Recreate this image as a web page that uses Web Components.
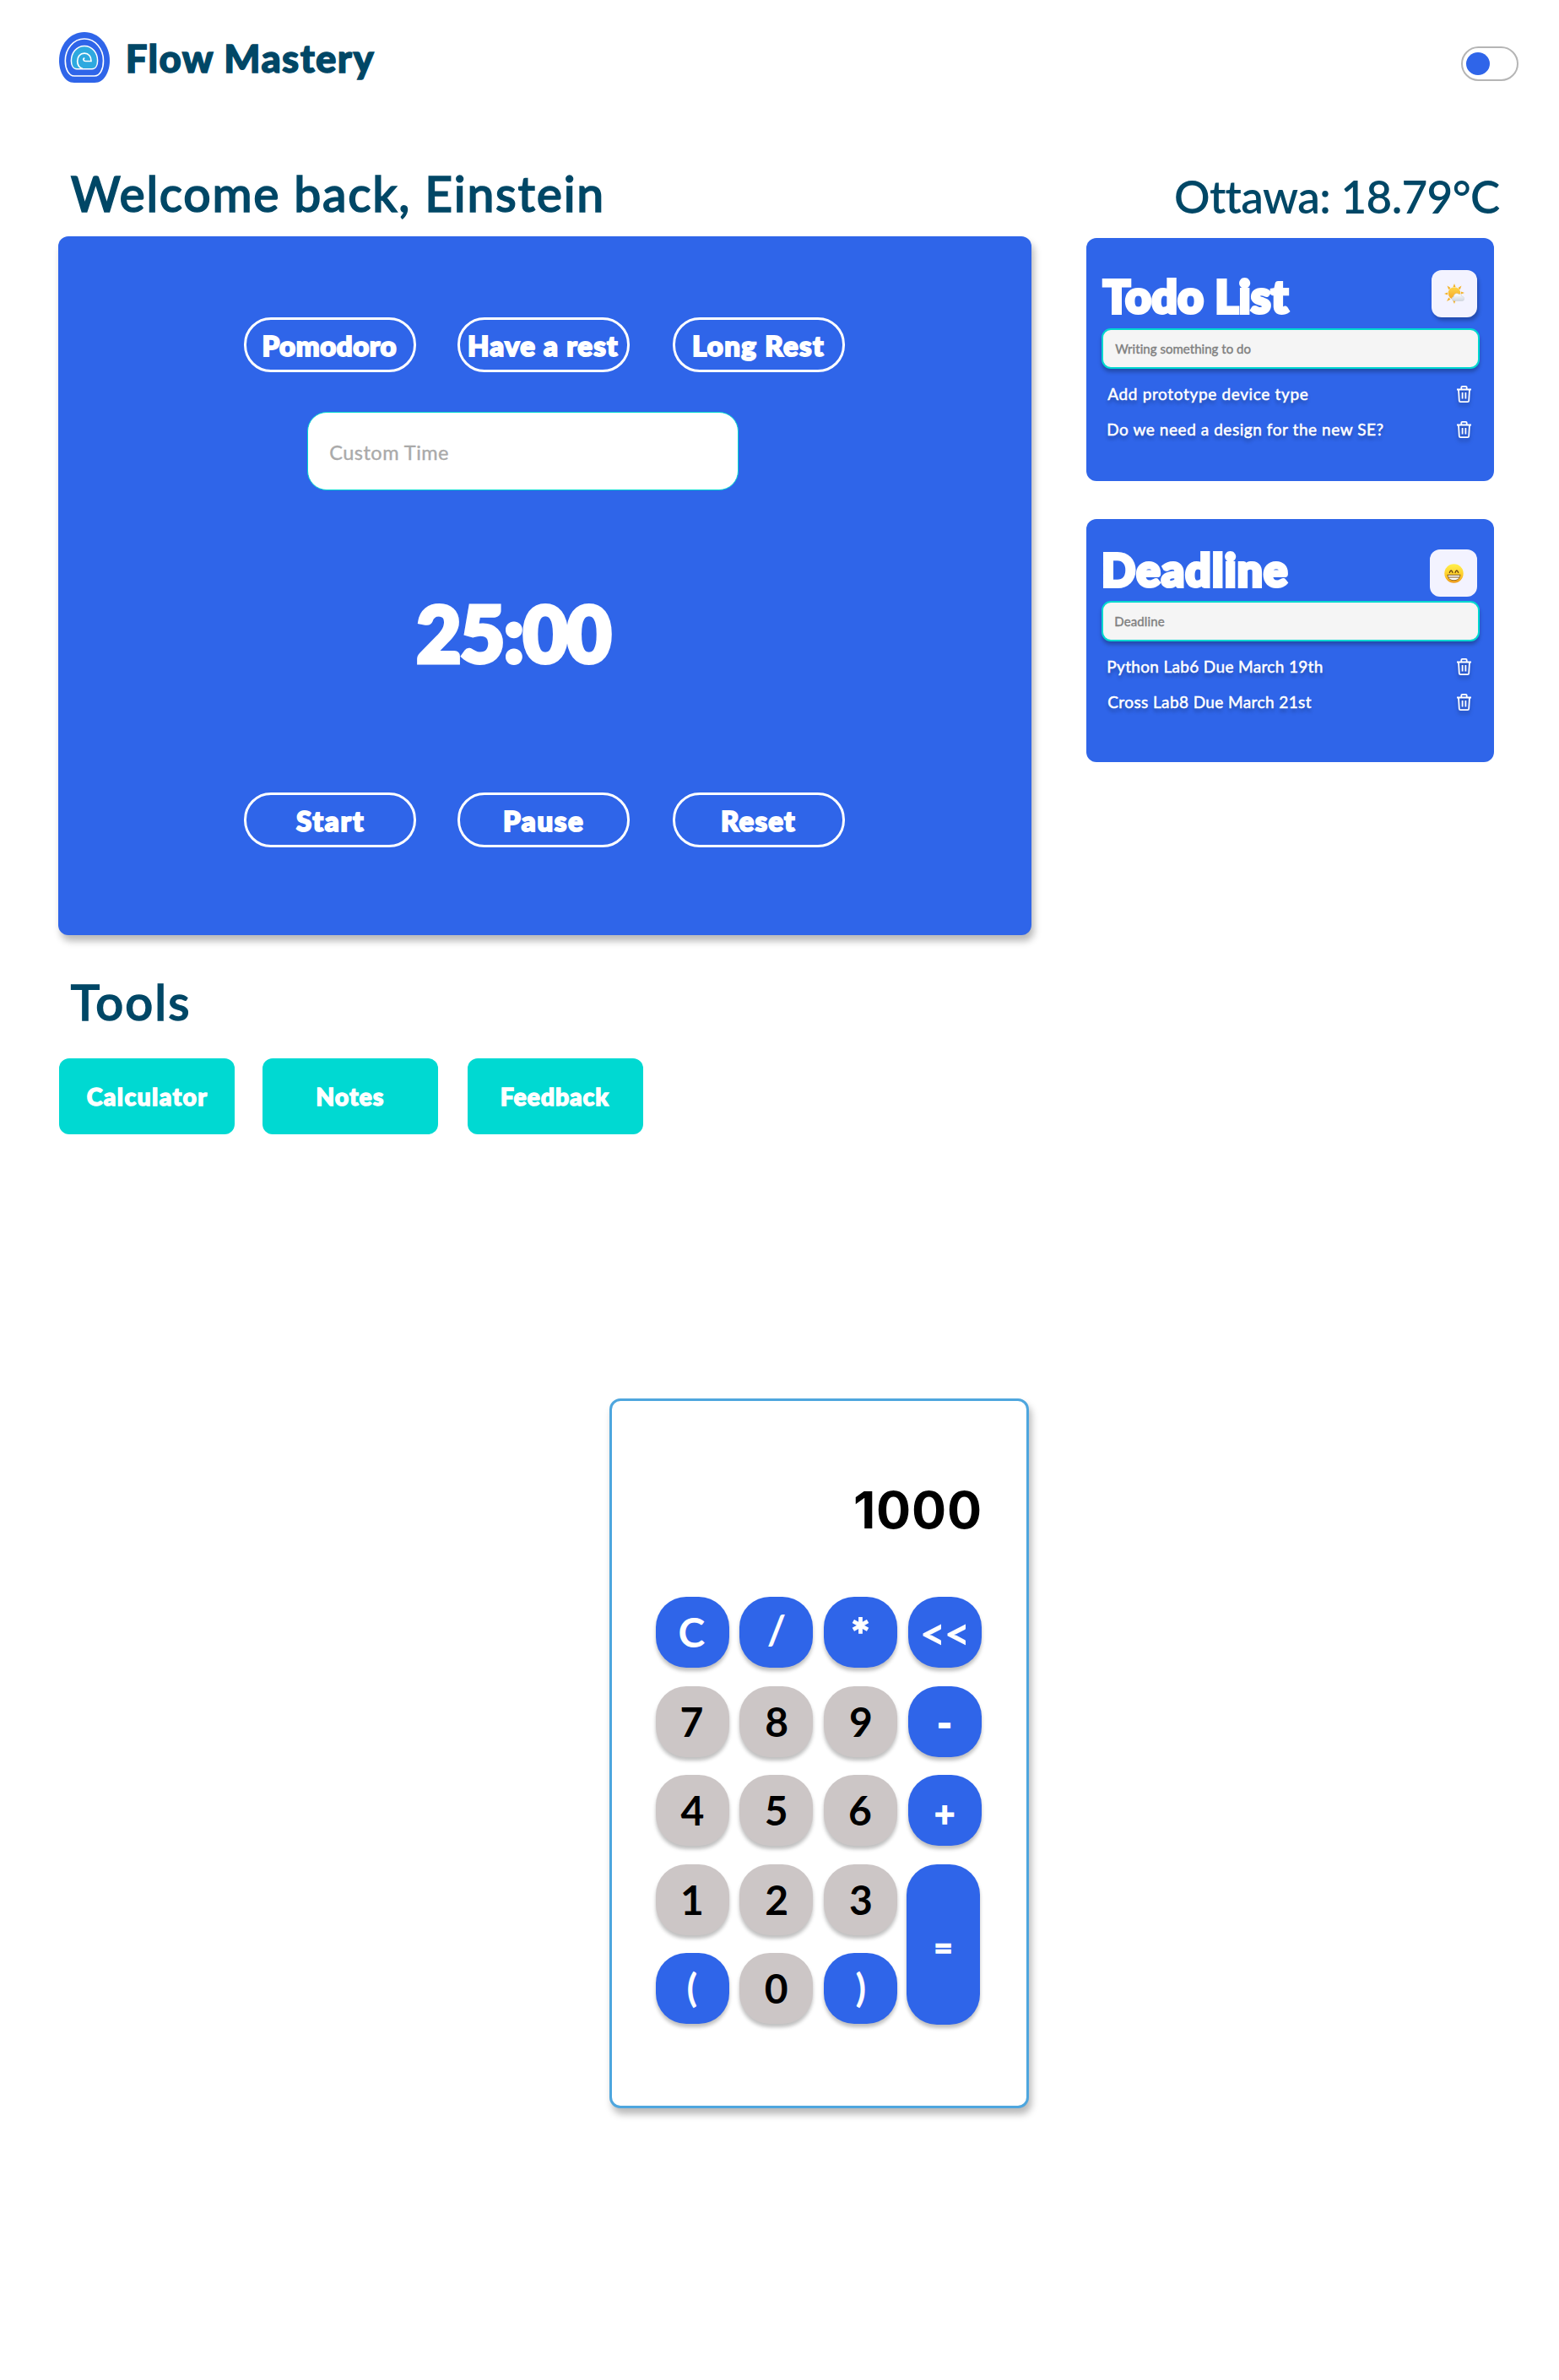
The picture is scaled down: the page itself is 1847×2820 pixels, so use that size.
<!DOCTYPE html>
<html lang="en">
<head>
<meta charset="utf-8">
<title>Flow Mastery</title>
<style>
  body { margin: 0; background: #fff; font-family: Lato, "Open Sans", sans-serif; }
</style>
</head>
<body>
<flow-app></flow-app>
<script>
const pen = document.createElement('canvas').getContext('2d');

/* One line of text whose ink spans exactly `w` pixels; `bold` thickens the strokes by that many pixels. */
class FitText extends HTMLElement {
  connectedCallback() {
    if (this.shadowRoot) return;
    const root = this.attachShadow({ mode: 'open' });
    const size = +this.getAttribute('size');
    const weight = this.getAttribute('weight') || '400';
    const family = this.getAttribute('family') || 'Lato';
    const bold = +this.getAttribute('bold') || 0;
    const text = this.textContent;
    pen.font = `${weight} ${size}px ${family}`;
    const m = pen.measureText(text);
    const ink = m.actualBoundingBoxLeft + m.actualBoundingBoxRight + bold;
    const w = +this.getAttribute('w') || ink;
    const gap = text.length > 1 ? (w - ink) / (text.length - 1) : 0;
    root.innerHTML = `<style>
      :host { display: block; flex: none; width: ${w}px; height: ${size}px; line-height: ${size}px;
        font-family: ${family}, sans-serif; font-size: ${size}px; font-weight: ${weight}; white-space: nowrap; }
      span { display: inline-block; margin-left: ${m.actualBoundingBoxLeft + bold / 2}px; letter-spacing: ${gap}px;
        ${bold ? `-webkit-text-stroke: ${bold}px currentColor;` : ''} }
    </style><span><slot></slot></span>`;
  }
}

class FlowLogo extends HTMLElement {
  constructor() {
    super();
    this.attachShadow({ mode: 'open' }).innerHTML = `<style>:host{display:block;width:60px;height:60px}svg{display:block}</style>
    <svg width="60" height="60" viewBox="0 0 60 60" fill="none">
      <path d="M30 0C47 0 60 15 60 34C60 46 54 60 42 60H18C6 60 0 46 0 34C0 15 13 0 30 0Z" fill="#2f65e9"/>
      <path d="M30 8C43 8 52.5 20 52.5 34C52.5 43 49 52 42 52H18C11 52 7.3 43 7.3 34C7.3 20 17 8 30 8Z" stroke="#fff" stroke-width="1.6"/>
      <path d="M30 16.4C39.5 16.4 45.6 25 45.6 34C45.6 39 43.5 43.7 39 43.7H21C16.500 43.7 14.400 39 14.400 34C14.400 25 20.500 16.400 30 16.400Z" fill="#2ea9df" stroke="#fff" stroke-width="1.500"/>
      <path d="M28 43.500C24 42 21.700 38.500 21.700 34.500C21.700 29 25 25.200 30 25.200C35 25.200 38.200 29 38 34.500H31.500C28.500 34.500 28 31.500 30.300 30.800" stroke="#fff" stroke-width="1.700"/>
    </svg>`;
  }
}

class ThemeSwitch extends HTMLElement {
  constructor() {
    super();
    this.attachShadow({ mode: 'open' }).innerHTML = `<style>
      :host{display:flex;align-items:center;box-sizing:border-box;width:68px;height:41px;border:2px solid #b5b5b5;border-radius:21px;padding-left:4px}
      i{width:28px;height:27px;border-radius:50%;background:#2f65e9}
    </style><i></i>`;
  }
}

class PillButton extends HTMLElement {
  constructor() {
    super();
    this.attachShadow({ mode: 'open' }).innerHTML = `<style>
      :host{display:flex;justify-content:center;box-sizing:border-box;width:204px;height:65px;border:3px solid #fff;border-radius:32px;padding-top:13.500px;color:#fff}
    </style><slot></slot>`;
  }
}

class ToolButton extends HTMLElement {
  constructor() {
    super();
    this.attachShadow({ mode: 'open' }).innerHTML = `<style>
      :host{display:flex;justify-content:center;box-sizing:border-box;width:208px;height:90px;border-radius:12px;padding-top:31px;background:#00d9d2;color:#fff}
    </style><slot></slot>`;
  }
}

class TrashIcon extends HTMLElement {
  constructor() {
    super();
    this.attachShadow({ mode: 'open' }).innerHTML = `<style>:host{display:block;width:17px;height:20px;filter:drop-shadow(0 4px 2px rgba(0,0,0,.25))}svg{display:block}</style>
    <svg width="17" height="20" viewBox="0 0 17 20" fill="none" stroke="#fff" stroke-width="1.800">
      <path d="M0 4.500H17M5.300 4.500V2Q5.300 .9 6.500 .9H10.500Q11.700 .9 11.700 2V4.500M2 4.500L2.800 17.700Q2.900 19.100 4.300 19.100H12.700Q14.100 19.100 14.200 17.700L15 4.500M6.600 8V15.500M10.400 8V15.500"/>
    </svg>`;
  }
}

class SunEmoji extends HTMLElement {
  constructor() {
    super();
    this.attachShadow({ mode: 'open' }).innerHTML = `<style>:host{display:block}svg{display:block}</style>
    <svg width="24" height="24" viewBox="0 0 24 24">
      <defs><linearGradient id="s" x1="0" y1="0" x2="0" y2="1"><stop offset="0" stop-color="#ffd64a"/><stop offset="1" stop-color="#f5a623"/></linearGradient>
      <linearGradient id="c" x1="0" y1="0" x2="0" y2="1"><stop offset="0" stop-color="#fff"/><stop offset="1" stop-color="#cfd6de"/></linearGradient></defs>
      <path fill="#f3b229" d="M12 0L13.500 4H10.500ZM3.500 2.500L7.500 5L5.300 7.200ZM20.500 2.500L18.700 7.200L16.500 5ZM0 12L4 10.500V13.500ZM24 11L20 9.500V12.500ZM3 21L5.300 16.500L7.500 18.700ZM12 24L10.200 20H13.500Z"/>
      <circle cx="12" cy="11.500" r="7.300" fill="url(#s)"/>
      <path d="M12 20.500C8.500 20.500 8 16.500 11 15.800C11.300 12.500 14.500 10.500 17.500 12.700C18.700 12 21 13 20.700 15C25 15.500 24.500 20.500 21 20.500Z" fill="url(#c)" stroke="#c8ced6" stroke-width=".5"/>
    </svg>`;
  }
}

class GrinEmoji extends HTMLElement {
  constructor() {
    super();
    this.attachShadow({ mode: 'open' }).innerHTML = `<style>:host{display:block}svg{display:block}</style>
    <svg width="23" height="23" viewBox="0 0 23 23">
      <defs><linearGradient id="g" x1="0" y1="0" x2="0" y2="1"><stop offset="0" stop-color="#fff04d"/><stop offset=".55" stop-color="#ffcf2b"/><stop offset="1" stop-color="#ee9a1c"/></linearGradient></defs>
      <circle cx="11.500" cy="11.500" r="11.200" fill="url(#g)"/>
      <path d="M6.300 10.500Q8.200 5.500 10 10.500M13 10.500Q14.800 5.500 16.700 10.500" fill="none" stroke="#6b4310" stroke-width="1.300" stroke-linecap="round"/>
      <path d="M3.500 12.800H19.500C19 17.500 16 20 11.500 20S4 17.500 3.500 12.800Z" fill="#7a5316"/>
      <path d="M4.500 13.700H18.500L18.200 15.500H4.800ZM5.400 16.500H17.600C16.500 18.500 14.500 19.200 11.500 19.200S6.500 18.500 5.400 16.500Z" fill="#fff"/>
    </svg>`;
  }
}

/* A blue panel: title and emoji tile, an entry field, and its rows. */
class ListCard extends HTMLElement {
  constructor() {
    super();
    this.attachShadow({ mode: 'open' }).innerHTML = `<style>
      :host{display:block;box-sizing:border-box;width:483px;height:288px;border-radius:12px;background:#2f65e9;color:#fff;padding:0 17px 0 18px}
      .top{display:flex;justify-content:space-between;height:var(--top,107px);padding-right:3px}
      .title{padding:var(--title,42px) 0 0 var(--indent,0px)}
      .tile{display:flex;align-items:center;justify-content:center;box-sizing:border-box;width:var(--tile,54px);height:56px;margin-top:var(--tile-top,38px);border-radius:12px;background:#f3f3ff;box-shadow:var(--tile-shadow,none)}
      .field{box-sizing:border-box;width:448px;height:48px;border:2px solid #00d7d0;border-radius:11px;background:#f5f5f5;color:#808080;padding:15px 0 0 14px;box-shadow:0 4px 4px rgba(0,0,0,.25)}
      .rows{padding-top:20px}
    </style>
    <div class="top"><div class="title"><slot name="title"></slot></div><div class="tile"><slot name="icon"></slot></div></div>
    <div class="field"><slot name="hint"></slot></div>
    <div class="rows"><slot></slot></div>`;
  }
}

class ListRow extends HTMLElement {
  constructor() {
    super();
    this.attachShadow({ mode: 'open' }).innerHTML = `<style>
      :host{display:flex;justify-content:space-between;height:41.500px;margin:0 10px 0 7px;text-shadow:0 4px 4px rgba(0,0,0,.3)}
    </style><slot></slot><trash-icon></trash-icon>`;
  }
}

class CalcKey extends HTMLElement {
  constructor() {
    super();
    this.attachShadow({ mode: 'open' }).innerHTML = `<style>
      :host{display:flex;justify-content:center;box-sizing:border-box;width:87px;height:84px;border-radius:36px;padding-top:var(--pt,18px);background:#2f65e9;color:#fff;box-shadow:0 4px 4px rgba(0,0,0,.25)}
      :host([num]){background:#ccc6c6;color:#000}
      :host([tall]){grid-row:span 2;height:190px;margin-left:-1.500px}
    </style><slot></slot>`;
  }
}

class CalcPanel extends HTMLElement {
  constructor() {
    super();
    /* label, top padding, font size, ink width */
    const keys = [
      ['C'], ['/', 15], ['*', 18, 54], ['<<', 16, 54, 51],
      ['7'], ['8'], ['9'], ['-', 19],
      ['4'], ['5'], ['6'], ['+', 25, 42],
      ['1'], ['2'], ['3'], ['=', 79, 38],
      ['(', 18, 46], ['0'], [')', 18, 46]
    ];
    const body = keys.map(([t, pt, size = 48, w]) => {
      const num = /\d/.test(t) ? 'num' : '';
      const tall = t === '=' ? 'tall' : '';
      const label = t.replace(/</g, '&lt;');
      const thick = /[-+=*]/.test(t) ? 1.5 : 0;
      return `<calc-key ${num} ${tall} ${pt ? `style="--pt:${pt}px"` : ''}><fit-text size="${size}" weight="700" ${w ? `w="${w}"` : ''} bold="${thick}">${label}</fit-text></calc-key>`;
    }).join('');
    this.attachShadow({ mode: 'open' }).innerHTML = `<style>
      :host{display:block;box-sizing:border-box;width:497px;height:841px;border:3px solid #4ea6de;border-radius:13px;background:#fff;box-shadow:3px 7px 8px rgba(0,0,0,.28)}
      .display{display:flex;justify-content:flex-end;height:133px;padding:99px 55px 0 0;color:#000}
      .keys{display:grid;grid-template-columns:repeat(4,87px);grid-auto-rows:84px;gap:21.500px 12.700px;padding-left:51.500px}
    </style>
    <div class="display"><fit-text size="61" weight="700" family="Inter" w="148">1000</fit-text></div>
    <div class="keys">${body}</div>`;
  }
}

class TimerCard extends HTMLElement {
  constructor() {
    super();
    this.attachShadow({ mode: 'open' }).innerHTML = `<style>
      :host{display:block;box-sizing:border-box;width:1153px;height:828px;border-radius:12px;background:#2f65e9;box-shadow:3px 7px 8px rgba(0,0,0,.28);color:#fff;padding:96px 0 0 220px}
      .row{display:flex;gap:49px}
      .row > :last-child{margin-left:2px}
      .field{box-sizing:border-box;width:511px;height:93px;margin:47px 0 0 75px;border:1px solid #00d7d0;border-radius:23px;background:#fff;color:#aaa;padding:36px 0 0 26px}
      .clock{height:228px;padding:123px 0 0 205px}
    </style>
    <div class="row">
      <pill-button><fit-text size="33" weight="900" bold="2" w="159">Pomodoro</fit-text></pill-button>
      <pill-button><fit-text size="33" weight="900" bold="2" w="178">Have a rest</fit-text></pill-button>
      <pill-button><fit-text size="33" weight="900" bold="2" w="156">Long Rest</fit-text></pill-button>
    </div>
    <div class="field"><fit-text size="23.500" bold=".4" w="141">Custom Time</fit-text></div>
    <div class="clock"><fit-text size="91" weight="900" bold="5" w="231">25:00</fit-text></div>
    <div class="row" style="margin-top:7px">
      <pill-button><fit-text size="33" weight="900" bold="2" w="82">Start</fit-text></pill-button>
      <pill-button><fit-text size="33" weight="900" bold="2" w="94">Pause</fit-text></pill-button>
      <pill-button><fit-text size="33" weight="900" bold="2" w="88">Reset</fit-text></pill-button>
    </div>`;
  }
}

class FlowApp extends HTMLElement {
  constructor() {
    super();
    this.attachShadow({ mode: 'open' }).innerHTML = `<style>
      :host{display:block;width:1847px;height:2820px;background:#fff;color:#004766;overflow:hidden}
      header{display:flex;box-sizing:border-box;height:140px;padding:38px 48px 0 70px}
      header fit-text{margin:8px auto 0 21px}
      theme-switch{margin-top:17px}
      main{display:flex;height:1517px}
      .left{width:1153px;margin-left:69px}
      .right{width:490px;margin-left:65px}
      .welcome{padding:61px 0 22px 14px}
      .tools-title{padding:50px 0 38px 14px}
      .tools{display:flex;gap:33px;padding-left:1px}
      .tools > :last-child{margin-left:2px}
      .weather{padding:66px 0 23px 106px}
      list-card{--tile-shadow:2px 4px 4px rgba(0,0,0,.25)}
      list-card + list-card{margin-top:45px;--title:33px;--top:97px;--indent:2px;--tile:56px;--tile-top:36px;--tile-shadow:none}
      calc-panel{margin-left:722px}
    </style>
    <header>
      <flow-logo></flow-logo>
      <fit-text size="45.500" weight="900" bold="1.400" w="294">Flow Mastery</fit-text>
      <theme-switch></theme-switch>
    </header>
    <main>
      <section class="left">
        <div class="welcome"><fit-text size="57" weight="500" bold="1.500" w="630">Welcome back, Einstein</fit-text></div>
        <timer-card></timer-card>
        <div class="tools-title"><fit-text size="58" weight="500" bold="1.500" w="141">Tools</fit-text></div>
        <div class="tools">
          <tool-button><fit-text size="28.500" weight="900" bold="1.400" w="144">Calculator</fit-text></tool-button>
          <tool-button><fit-text size="28.500" weight="900" bold="1.400" w="79">Notes</fit-text></tool-button>
          <tool-button><fit-text size="28.500" weight="900" bold="1.400" w="128">Feedback</fit-text></tool-button>
        </div>
      </section>
      <section class="right">
        <div class="weather"><fit-text size="53" weight="600" w="382">Ottawa: 18.79°C</fit-text></div>
        <list-card>
          <fit-text slot="title" size="53" weight="900" bold="4" w="223">Todo List</fit-text>
          <sun-emoji slot="icon"></sun-emoji>
          <fit-text slot="hint" size="15" bold=".4" w="161">Writing something to do</fit-text>
          <list-row><fit-text size="19" bold=".5" w="238">Add prototype device type</fit-text></list-row>
          <list-row><fit-text size="19" bold=".5" w="328">Do we need a design for the new SE?</fit-text></list-row>
        </list-card>
        <list-card>
          <fit-text slot="title" size="53" weight="900" bold="4" w="219">Deadline</fit-text>
          <grin-emoji slot="icon"></grin-emoji>
          <fit-text slot="hint" size="15" bold=".4" w="59">Deadline</fit-text>
          <list-row><fit-text size="19" bold=".5" w="255">Python Lab6 Due March 19th</fit-text></list-row>
          <list-row><fit-text size="19" bold=".5" w="242">Cross Lab8 Due March 21st</fit-text></list-row>
        </list-card>
      </section>
    </main>
    <calc-panel></calc-panel>`;
  }
}

customElements.define('fit-text', FitText);
customElements.define('flow-logo', FlowLogo);
customElements.define('theme-switch', ThemeSwitch);
customElements.define('pill-button', PillButton);
customElements.define('tool-button', ToolButton);
customElements.define('trash-icon', TrashIcon);
customElements.define('sun-emoji', SunEmoji);
customElements.define('grin-emoji', GrinEmoji);
customElements.define('list-row', ListRow);
customElements.define('list-card', ListCard);
customElements.define('calc-key', CalcKey);
customElements.define('calc-panel', CalcPanel);
customElements.define('timer-card', TimerCard);
customElements.define('flow-app', FlowApp);
</script>
</body>
</html>
